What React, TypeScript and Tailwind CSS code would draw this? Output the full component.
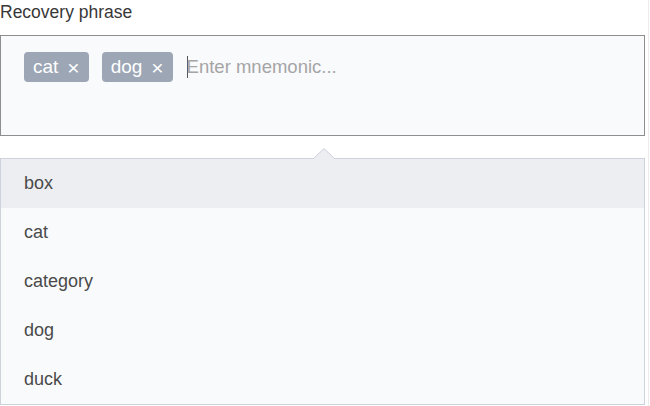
import React from "react";

const tags = ["cat", "dog"];
const options = ["box", "cat", "category", "dog", "duck"];

function Tag({ label }: { label: string }) {
	return (
		<span className="flex h-[30px] items-center gap-[9px] rounded-[4px] bg-[#9ca6b5] pl-[9px] pr-[9px] text-[19px] text-white">
			{label}
			<span className="text-[21px] leading-none">×</span>
		</span>
	);
}

export default function App() {
	return (
		<div
			className="h-[406px] w-[649px] border-r border-[#ececec] bg-white"
			style={{ fontFamily: '"Liberation Sans", Arial, sans-serif' }}
		>
			{/* Label */}
			<div className="h-[35px] pt-[1px] text-[17.5px] leading-[22px] text-[#383838]">Recovery phrase</div>

			{/* Mnemonic input */}
			<div className="flex h-[101px] w-[645px] items-start gap-[13px] border border-[#8e8e8e] bg-[#f9fafc] pl-[23px] pt-[16px]">
				{tags.map((t) => (
					<Tag key={t} label={t} />
				))}
				<div className="ml-px flex h-[30px] items-center">
					<span className="mr-[-1px] h-[22px] w-px bg-[#555]" />
					<span className="text-[18.5px] text-[#a5a5a5]">Enter mnemonic...</span>
				</div>
			</div>

			{/* Suggestions */}
			<div className="relative mt-[22px] w-[645px] border border-[#cdd2db] bg-[#f9fafc]">
				<svg
					className="absolute left-[312px] top-[-11px]"
					width="22"
					height="12"
					viewBox="0 0 22 12"
				>
					<polygon points="0,11 11,0 22,11" fill="#edeef2" />
					<polyline points="0,11 11,0.7 22,11" fill="none" stroke="#cdd2db" strokeWidth="1" />
				</svg>
				{options.map((o, i) => (
					<div
						key={o}
						className={
							i === 0
								? "flex h-[49px] items-center bg-[#edeef2] pl-[23px] text-[18px] text-[#4a4a4a]"
								: "flex h-[49px] items-center pl-[23px] text-[18px] text-[#4a4a4a]"
						}
					>
						{o}
					</div>
				))}
			</div>
		</div>
	);
}
